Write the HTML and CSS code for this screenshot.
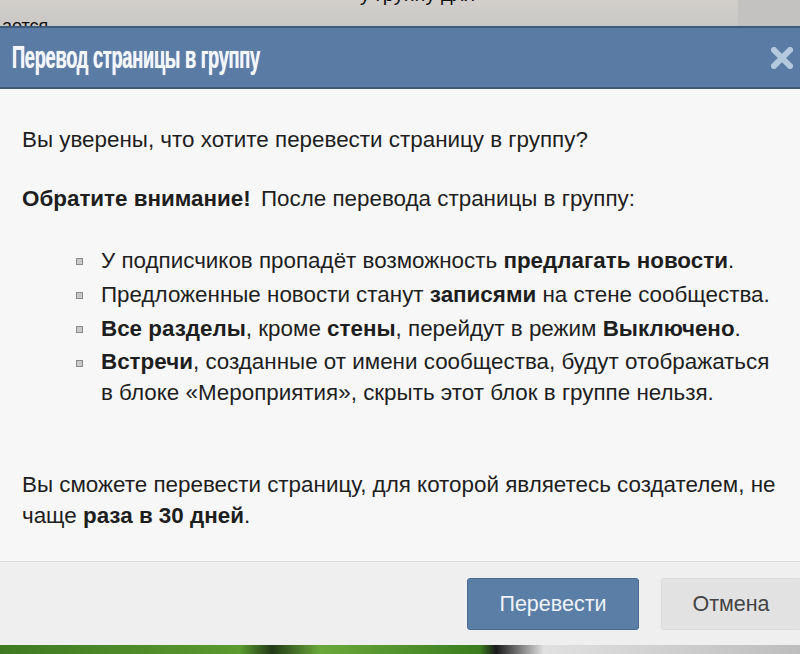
FILE: index.html
```html
<!DOCTYPE html>
<html lang="ru">
<head>
<meta charset="utf-8">
<link rel="stylesheet" href="styles.css">
</head>
<body>
<div class="page">
  <div class="bg-top">
    <span class="frag frag-left">ается</span>
    <span class="frag frag-mid">у группу для</span>
    <div class="bg-side"></div>
  </div>
  <div class="dialog">
    <div class="head">
      <span class="title">Перевод страницы в группу</span>
      <svg class="close" width="22" height="22" viewBox="0 0 22 22"><path d="M3 3 L19 19 M19 3 L3 19" stroke="#b4c8de" stroke-width="6" stroke-linecap="square"/></svg>
    </div>
    <div class="body">
      <p class="q">Вы уверены, что хотите перевести страницу в группу?</p>
      <p class="note"><b>Обратите внимание!</b> После перевода страницы в группу:</p>
      <ul class="list">
        <li>У подписчиков пропадёт возможность <b>предлагать новости</b>.</li>
        <li>Предложенные новости станут <b>записями</b> на стене сообщества.</li>
        <li><b>Все разделы</b>, кроме <b>стены</b>, перейдут в режим <b>Выключено</b>.</li>
        <li><b>Встречи</b>, созданные от имени сообщества, будут отображаться в блоке «Мероприятия», скрыть этот блок в группе нельзя.</li>
      </ul>
      <p class="limit">Вы сможете перевести страницу, для которой являетесь создателем, не чаще <b>раза в 30 дней</b>.</p>
    </div>
    <div class="foot">
      <button class="btn btn-primary">Перевести</button>
      <button class="btn btn-cancel">Отмена</button>
    </div>
  </div>
  <div class="bg-bottom"></div>
</div>
</body>
</html>
```

FILE: styles.css
```css
html, body {
  margin: 0;
  padding: 0;
  width: 800px;
  height: 654px;
  overflow: hidden;
  background: #f7f7f7;
}
.page {
  display: flex;
  flex-direction: column;
  height: 654px;
  font-family: "Liberation Sans", Arial, sans-serif;
  color: #222;
}
.bg-top {
  height: 26px;
  position: relative;
  overflow: hidden;
  background: linear-gradient(#d2cfcb, #c9c8c6);
  border-bottom: 2px solid #3e5b7e;
}
.frag {
  position: absolute;
  font-size: 20px;
  color: #111;
  line-height: 20px;
}
.frag-left { left: 2px; top: 16px; font-size: 18px; }
.frag-mid { left: 360px; top: -16px; }
.bg-side {
  position: absolute;
  right: 0;
  top: 0;
  width: 62px;
  height: 100%;
  background: #c4c2c0;
}
.dialog {
  flex: 1;
  display: flex;
  flex-direction: column;
}
.head {
  height: 59px;
  background: #5a7ba4;
  border-bottom: 2px solid #3f5876;
  display: flex;
  align-items: center;
  justify-content: space-between;
  padding: 0 7px 0 12px;
}
.title {
  color: #f4f7fa;
  font-weight: bold;
  font-size: 31px;
  display: inline-block;
  transform: scaleX(0.59);
  transform-origin: left center;
  white-space: nowrap;
  letter-spacing: -0.5px;
  text-shadow: 0 0 1px #dfe6ee;
}
.close {
  display: block;
}
.body {
  height: 472px;
  padding: 0 0 0 22px;
  font-size: 22.4px;
  color: #1e1e1e;
}
.body p { margin: 0; }
.q {
  padding-top: 38px;
  line-height: 26px;
}
.note {
  margin-top: 33px !important;
  line-height: 26px;
}
.note b { margin-right: 4px; }
.list {
  list-style: none;
  margin: 32px 0 0 0;
  padding: 0 0 0 79px;
}
.list li {
  position: relative;
  padding-right: 26px;
  line-height: 34px;
}
.list li:last-child { line-height: 31px; }
.list li::before {
  content: "";
  position: absolute;
  left: -25px;
  top: 14px;
  width: 5px;
  height: 5px;
  background: #c9c9c9;
  border: 1px solid #8a8a8a;
}
.limit {
  margin-top: 61px !important;
  line-height: 31px;
  padding-right: 20px;
}
.foot {
  flex: 1;
  background: #efefef;
  border-top: 1px solid #d8d8d8;
  display: flex;
  align-items: flex-start;
  justify-content: flex-end;
  gap: 22px;
  padding-top: 16px;
}
.btn {
  height: 52px;
  font-family: "Liberation Sans", Arial, sans-serif;
  font-size: 21.5px;
  border-radius: 3px;
  cursor: pointer;
}
.btn-primary {
  width: 172px;
  background: #5b7ea7;
  border: 1px solid #4a6b93;
  color: #eef3f8;
}
.btn-cancel {
  width: 140px;
  margin-right: -1px;
  background: #e2e2e2;
  border: 1px solid #dadada;
  color: #444;
}
.bg-bottom {
  height: 9px;
  background: linear-gradient(90deg, #3f7a22 0%, #5a9a2e 30%, #233a18 34%, #6aa83a 40%, #3b7d1f 60%, #1a1a1a 62%, #e0e0e0 68%, #bdbdbd 100%);
}
```
